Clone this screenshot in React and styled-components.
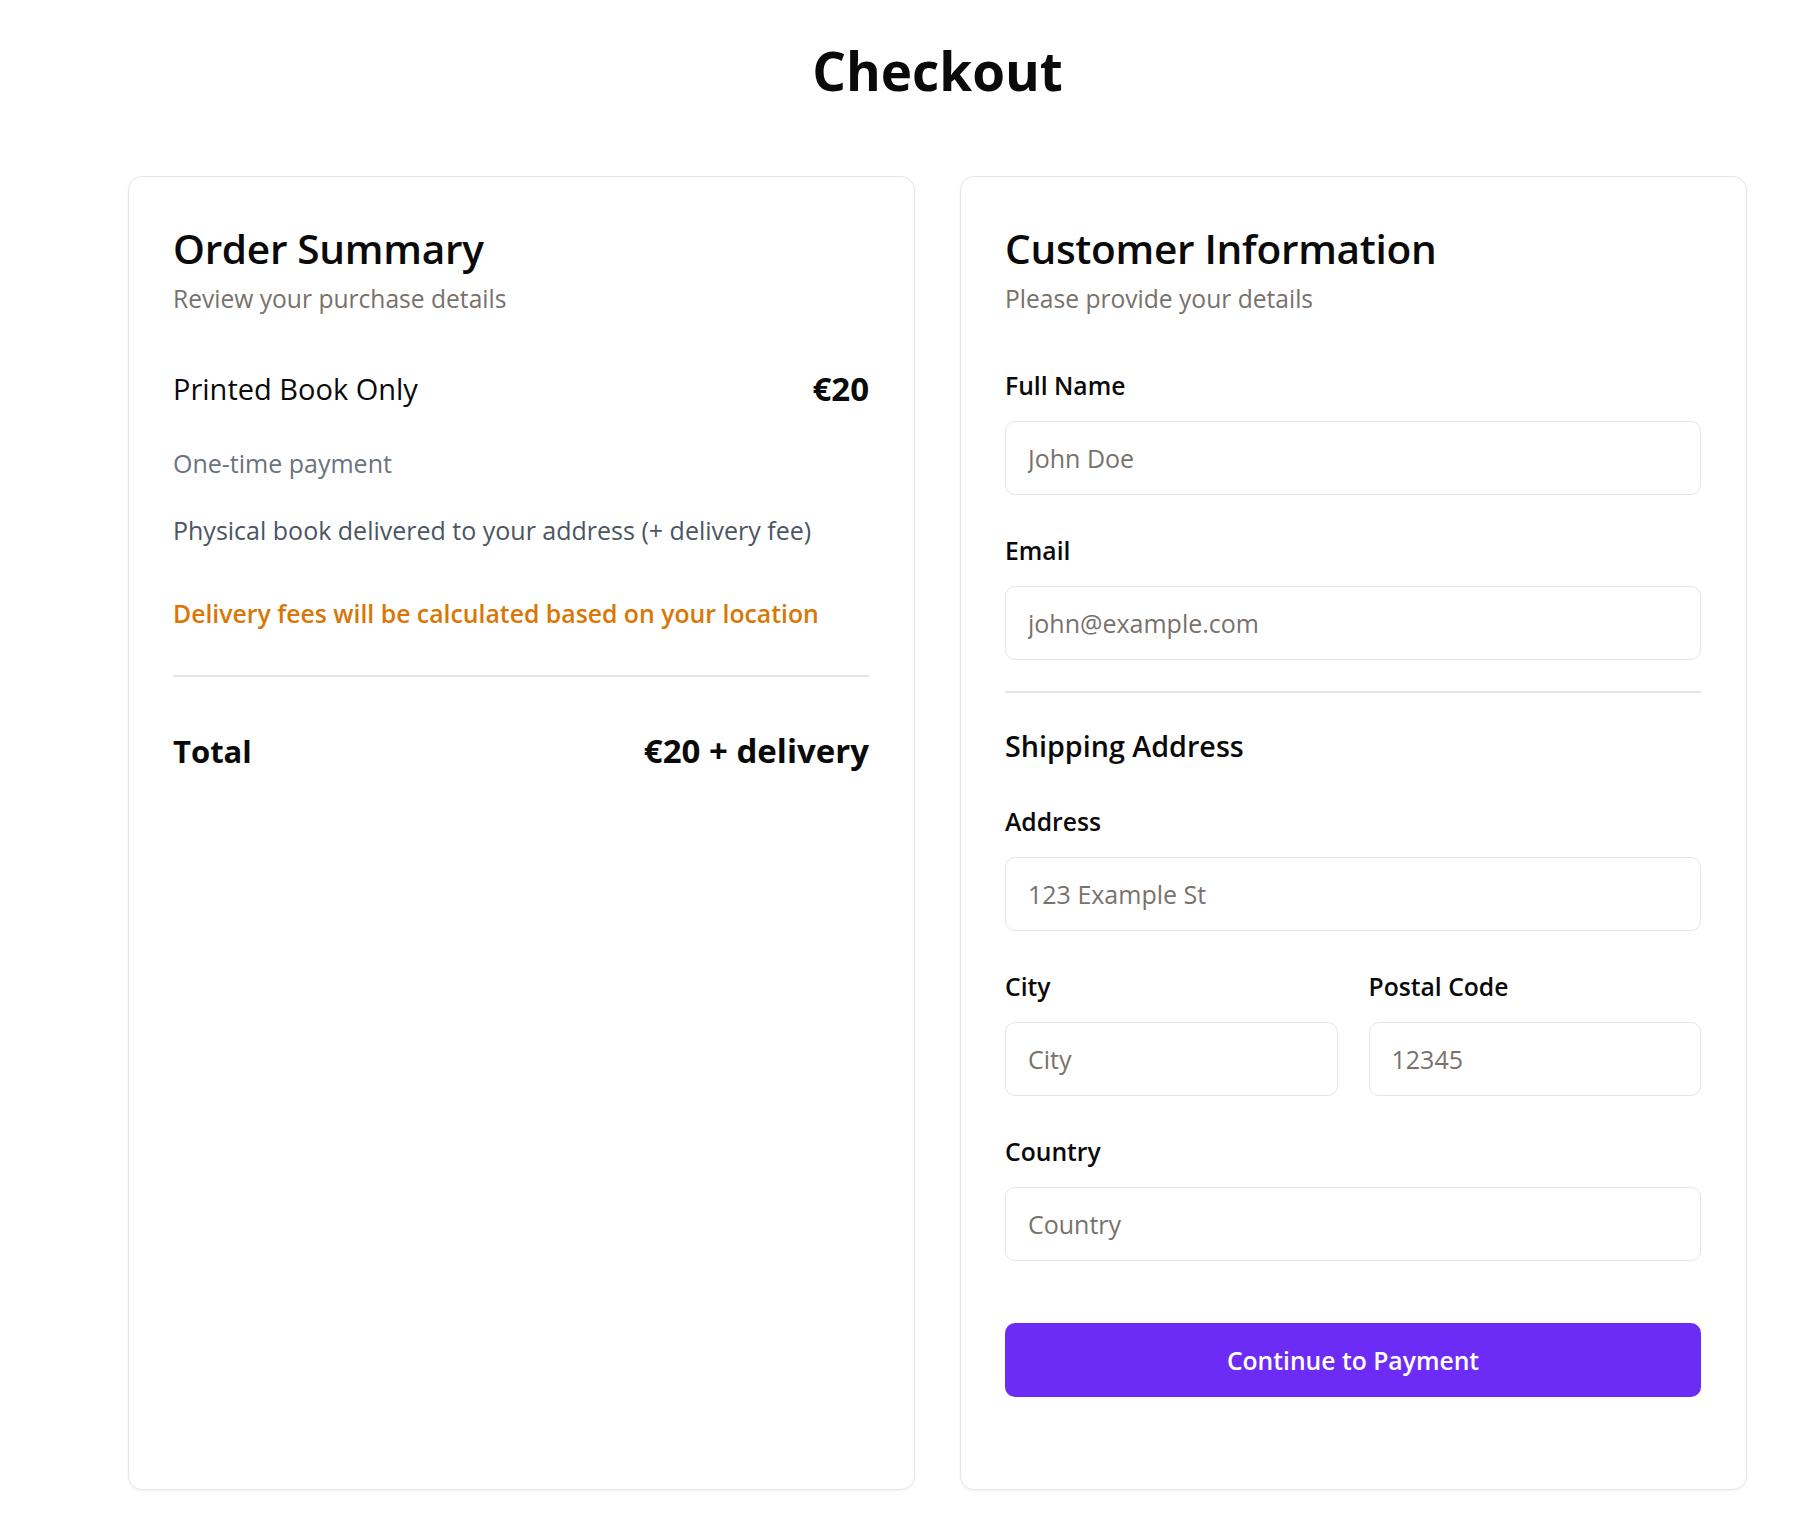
import React from 'react'
import styled, { createGlobalStyle } from 'styled-components';

const GlobalStyle = createGlobalStyle`
  * { box-sizing: border-box; }
  body {
    margin: 0;
    background: #ffffff;
    font-family: "Open Sans", "Noto Sans", sans-serif;
    color: #0a0a0a;
  }
`;

const fields = [
  { label: 'Full Name', placeholder: 'John Doe' },
  { label: 'Email', placeholder: 'john@example.com' },
];

class App extends React.Component {
  render() {
    return (
      <Page>
        <GlobalStyle />
        <Title>Checkout</Title>
        <Columns>
          <Card>
            <CardTitle>Order Summary</CardTitle>
            <CardSubtitle>Review your purchase details</CardSubtitle>
            <ItemRow>
              <ItemName>Printed Book Only</ItemName>
              <ItemPrice>€20</ItemPrice>
            </ItemRow>
            <Muted>One-time payment</Muted>
            <Description>Physical book delivered to your address (+ delivery fee)</Description>
            <Notice>Delivery fees will be calculated based on your location</Notice>
            <Divider $top={46} />
            <TotalRow>
              <span>Total</span>
              <span>€20 + delivery</span>
            </TotalRow>
          </Card>

          <Card>
            <CardTitle>Customer Information</CardTitle>
            <CardSubtitle>Please provide your details</CardSubtitle>
            <Form>
              {fields.map((f) => (
                <Field key={f.label}>
                  <Label>{f.label}</Label>
                  <Input placeholder={f.placeholder} />
                </Field>
              ))}
              <Divider $top={-9} />
              <SectionTitle>Shipping Address</SectionTitle>
              <Field>
                <Label>Address</Label>
                <Input placeholder="123 Example St" />
              </Field>
              <TwoCols>
                <Field>
                  <Label>City</Label>
                  <Input placeholder="City" />
                </Field>
                <Field>
                  <Label>Postal Code</Label>
                  <Input placeholder="12345" />
                </Field>
              </TwoCols>
              <Field>
                <Label>Country</Label>
                <Input placeholder="Country" />
              </Field>
              <SubmitButton type="button">Continue to Payment</SubmitButton>
            </Form>
          </Card>
        </Columns>
      </Page>
    )
  }
}

export default App;

const Page = styled.div`
  padding: 41px 63px 37px 128px;
`;

const Title = styled.h1`
  margin: 0 0 75px;
  text-align: center;
  font-size: 53px;
  line-height: 60px;
  font-weight: 700;
  color: #0a0a0a;
`;

const Columns = styled.div`
  display: grid;
  grid-template-columns: 1fr 1fr;
  gap: 45px;
`;

const Card = styled.section`
  display: flex;
  flex-direction: column;
  padding: 48px 45px 48px 44px;
  background: #fff;
  border: 1px solid #e7e7e9;
  border-radius: 14px;
  box-shadow: 0 1px 3px rgba(0, 0, 0, 0.05);
`;

const CardTitle = styled.h2`
  margin: 0;
  font-size: 40.6px;
  line-height: 48px;
  font-weight: 600;
  letter-spacing: -0.3px;
  color: #0a0a0a;
`;

const CardSubtitle = styled.p`
  margin: 10px 0 0;
  font-size: 24.6px;
  line-height: 32px;
  color: #78716c;
`;

const ItemRow = styled.div`
  display: flex;
  justify-content: space-between;
  align-items: center;
  margin-top: 56px;
`;

const ItemName = styled.span`
  font-size: 29px;
  line-height: 35px;
  font-weight: 500;
`;

const ItemPrice = styled.span`
  font-size: 33px;
  line-height: 35px;
  font-weight: 700;
`;

const Muted = styled.p`
  margin: 41px 0 0;
  font-size: 25px;
  line-height: 32px;
  color: #6b7280;
`;

const Description = styled.p`
  margin: 35px 0 0;
  font-size: 25px;
  line-height: 32px;
  color: #4b5563;
`;

const Notice = styled.p`
  margin: 51px 0 0;
  font-size: 24.8px;
  line-height: 32px;
  font-weight: 600;
  color: #d97706;
`;

const Divider = styled.hr`
  margin: ${(p) => p.$top}px 0 0;
  border: 0;
  border-top: 2px solid #e5e5e5;
`;

const TotalRow = styled.div`
  display: flex;
  justify-content: space-between;
  align-items: center;
  margin-top: 54px;
  font-size: 33px;
  line-height: 40px;
  font-weight: 700;

  span:first-child {
    font-size: 31px;
  }
`;

const Form = styled.form`
  display: flex;
  flex-direction: column;
  gap: 40px;
  margin-top: 55px;
  margin-bottom: 44px;
`;

const Field = styled.div`
  display: flex;
  flex-direction: column;
  gap: 19px;
`;

const Label = styled.label`
  font-size: 24.7px;
  line-height: 32px;
  font-weight: 600;
  color: #0a0a0a;
`;

const Input = styled.input`
  height: 74px;
  width: 100%;
  padding: 0 22px;
  border: 1px solid #e5e5e5;
  border-radius: 10px;
  font-family: inherit;
  font-size: 25px;
  color: #0a0a0a;
  background: #fff;
  outline: none;

  &::placeholder {
    color: #78716c;
  }
`;

const SectionTitle = styled.h3`
  margin: -5px 0 2px;
  font-size: 28.7px;
  line-height: 36px;
  font-weight: 600;
  color: #0a0a0a;
`;

const TwoCols = styled.div`
  display: grid;
  grid-template-columns: 1fr 1fr;
  gap: 31px;
`;

const SubmitButton = styled.button`
  height: 74px;
  margin-top: 22px;
  border: 0;
  border-radius: 10px;
  background: #6d2cf5;
  color: #fff;
  font-family: inherit;
  font-size: 24.7px;
  font-weight: 600;
  cursor: pointer;
`;
